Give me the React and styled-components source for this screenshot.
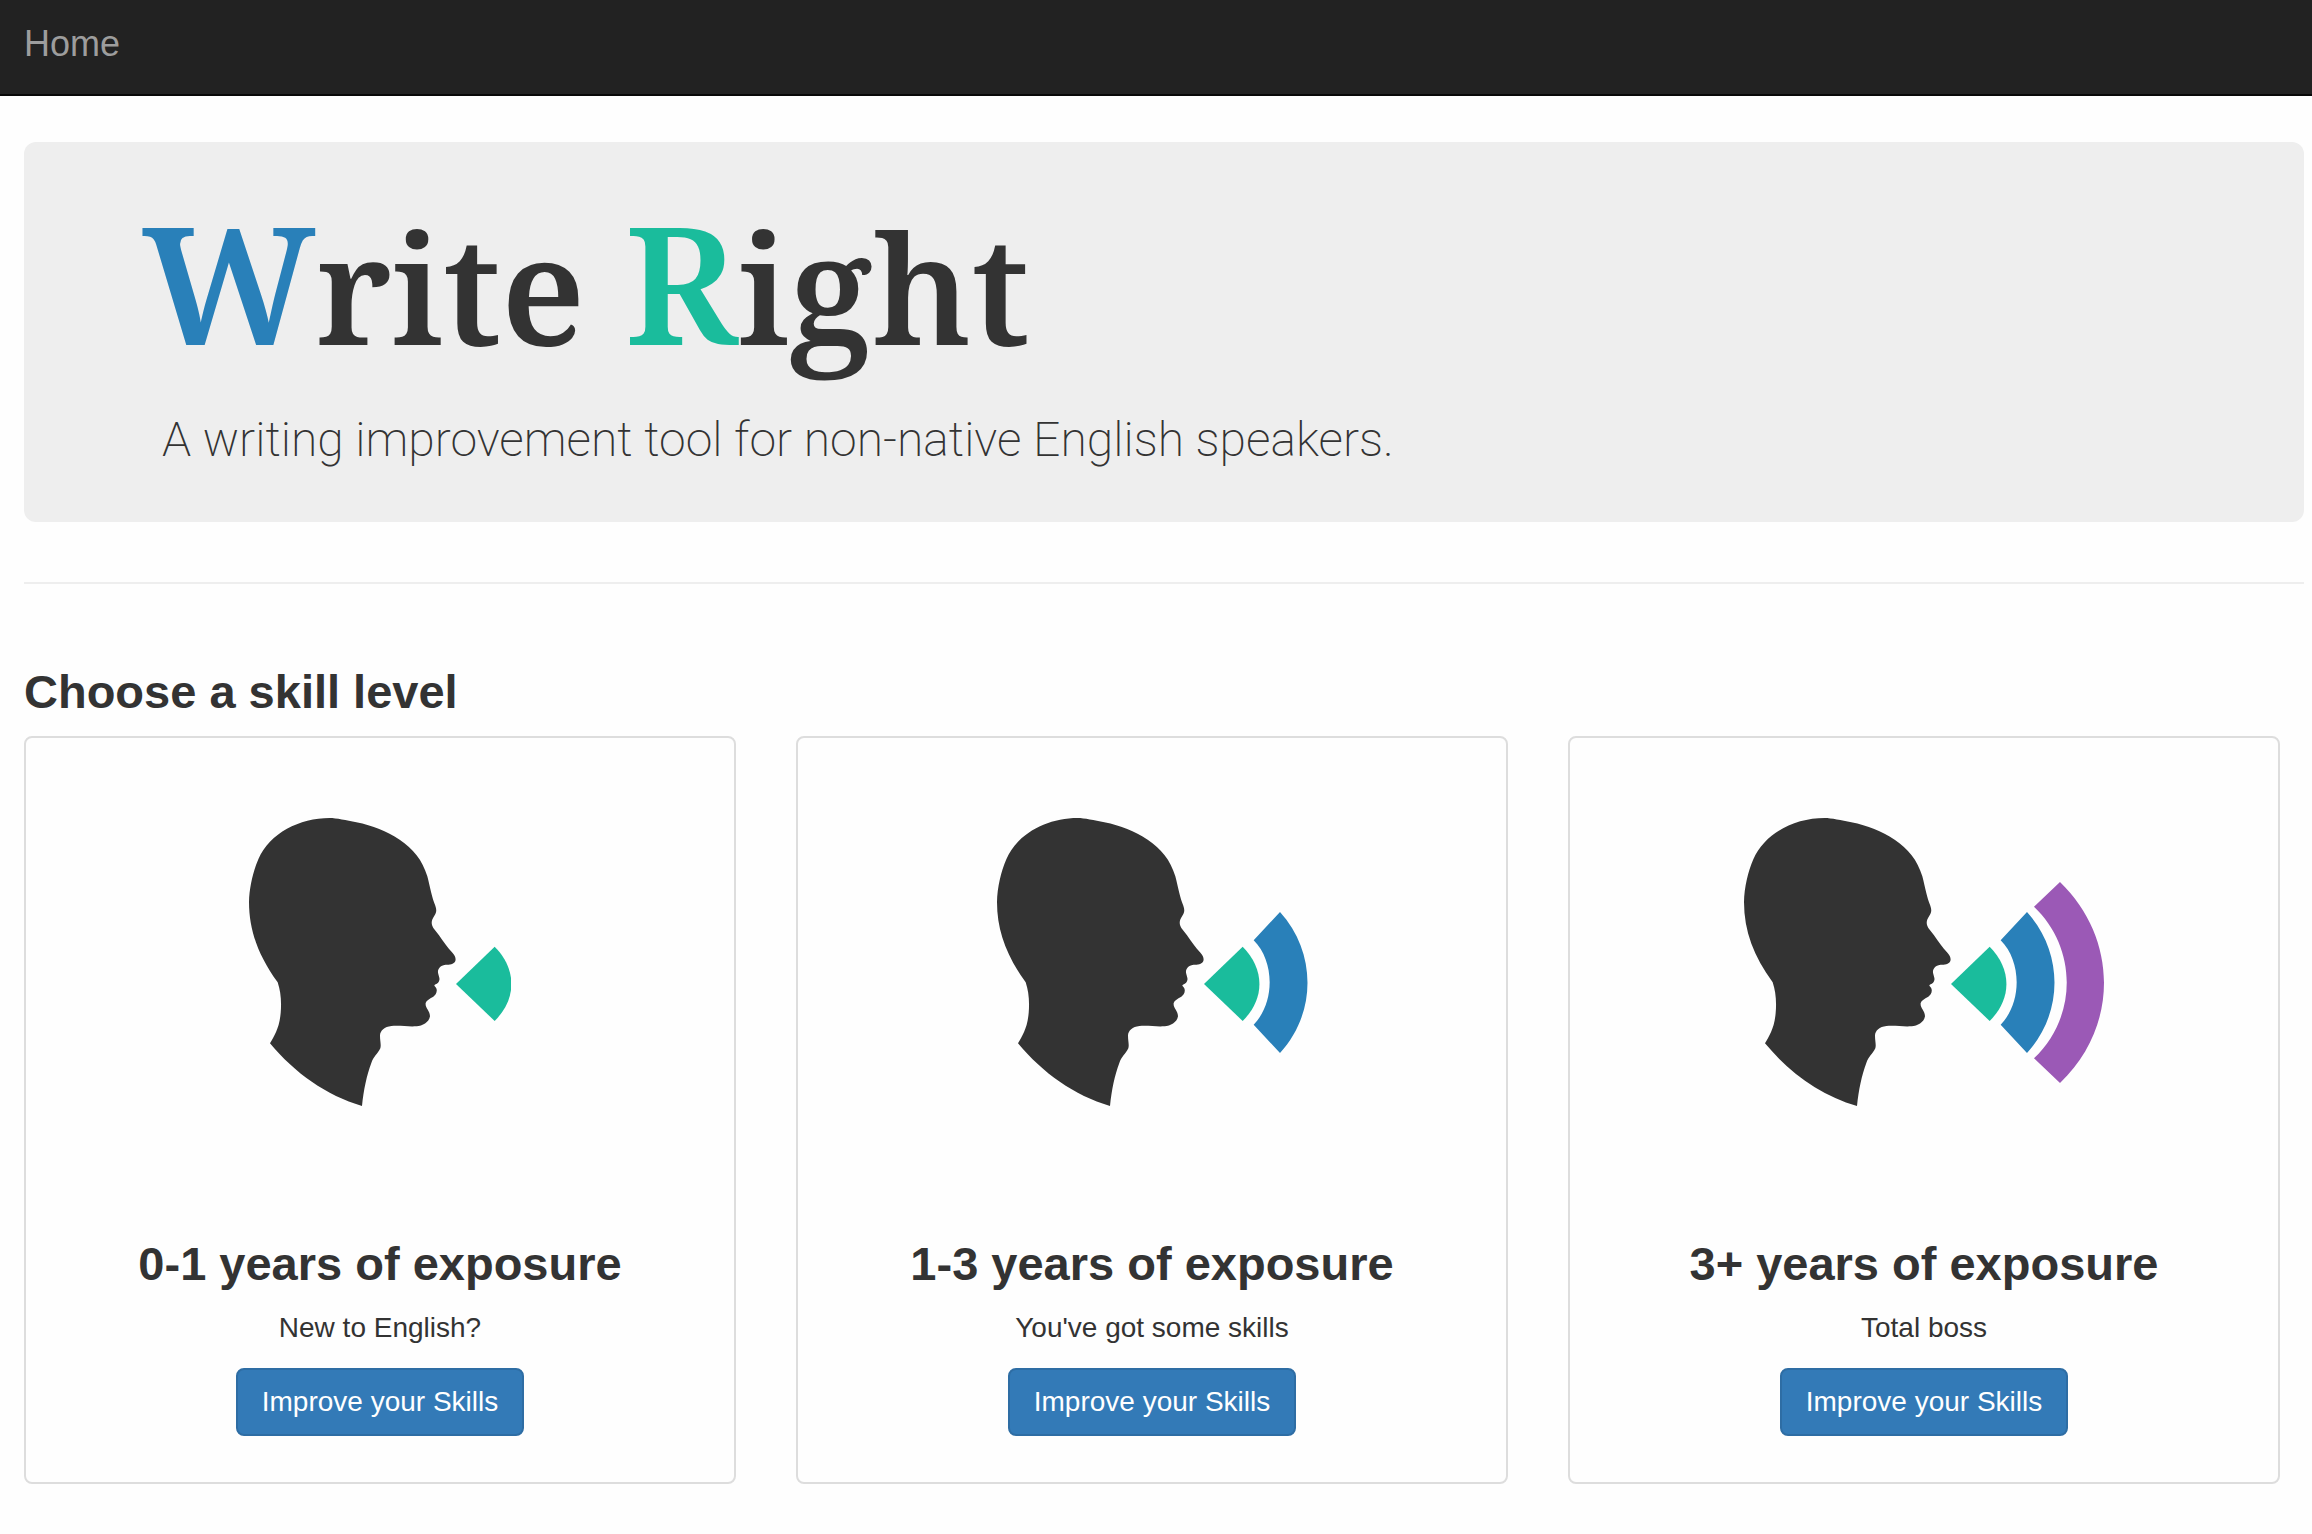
import styled, { createGlobalStyle } from 'styled-components'

const colors = {
    text: '#333333',
    blue: '#2980b9',
    green: '#1abc9c',
    purple: '#9b59b6',
    navbar: '#222222',
    navbarLink: '#9d9d9d',
    jumbotron: '#eeeeee',
    border: '#dddddd',
    primary: '#337ab7',
    primaryBorder: '#2e6da4',
}

const GlobalStyle = createGlobalStyle`
    * {
        box-sizing: border-box;
    }
    body {
        margin: 0;
        background-color: #fefefe;
        color: ${colors.text};
        font-family: 'Liberation Sans', Arial, sans-serif;
        font-size: 28px;
        line-height: 40px;
    }
`

const Navbar = styled.nav`
    padding: 24px 24px 30px;
    background-color: ${colors.navbar};
    border-bottom: 2px solid #080808;
`

const NavLink = styled.a`
    display: block;
    width: fit-content;
    font-size: 36px;
    color: ${colors.navbarLink};
    text-decoration: none;
    &:hover {
        color: #ffffff;
    }
`

const Main = styled.main`
    padding: 46px 8px 50px 24px;
`

const Jumbotron = styled.header`
    padding: 60px 118px 54px;
    border-radius: 12px;
    background-color: ${colors.jumbotron};
`

const Title = styled.h1`
    margin: 0 0 40px;
    font-family: 'Noto Serif', 'Liberation Serif', serif;
    font-size: 151px;
    font-weight: 600;
    line-height: 170px;
`

const Initial = styled.span`
    font-size: 164px;
    line-height: 150px;
    color: ${(props) => props.$color};
`

const Tagline = styled.p`
    margin: 0;
    padding-left: 20px;
    font-family: Roboto, sans-serif;
    font-size: 48px;
    font-weight: 200;
    line-height: 56px;
`

const Divider = styled.hr`
    margin: 60px 0 82px;
    border: 0;
    border-top: 2px solid ${colors.jumbotron};
`

const Levels = styled.section`
    padding-right: 24px;
`

const Heading = styled.h3`
    margin: 0 0 18px;
    font-size: 47px;
    font-weight: bold;
    line-height: 52px;
`

const CardGrid = styled.div`
    display: grid;
    grid-template-columns: repeat(3, 1fr);
    gap: 60px;
`

const Card = styled.article`
    display: flex;
    flex-direction: column;
    align-items: center;
    padding: 80px 8px 46px;
    border: 2px solid ${colors.border};
    border-radius: 8px;
    text-align: center;
`

const Illustration = styled.svg`
    height: 288px;
    margin-bottom: 132px;
`

const CardText = styled.p`
    margin: 0 0 20px;
`

const Button = styled.button`
    padding: 12px 24px;
    border: 2px solid ${colors.primaryBorder};
    border-radius: 8px;
    background-color: ${colors.primary};
    color: #ffffff;
    font-family: inherit;
    font-size: 28px;
    line-height: 40px;
    cursor: pointer;
`

const waves = [
    {
        color: colors.green,
        d: 'M769 613 L885 501 C952 568 952 658 885 724 Z',
    },
    {
        color: colors.blue,
        d: 'M918 482 L997 397 C1107 518 1107 700 997 820 L918 735 C982 670 982 546 918 482 Z',
    },
    {
        color: colors.purple,
        d: 'M1018 381 L1096 307 C1272 478 1272 742 1096 910 L1018 836 C1149 712 1149 505 1018 381 Z',
    },
]

const levels = [
    { title: '0-1 years of exposure', text: 'New to English?', width: 788 },
    { title: '1-3 years of exposure', text: "You've got some skills", width: 933 },
    { title: '3+ years of exposure', text: 'Total boss', width: 1081 },
]

function TalkingHead({ width, count }) {
    return (
        <Illustration viewBox={`148 115 ${width} 864`} aria-hidden="true">
            <path
                fill={colors.text}
                d="M390 115 C410 115 440 122 470 128 C520 138 560 154 600 180 C640 207 668 240 683 290 C692 325 697 355 707 378 C711 390 711 396 705 407 C694 424 694 431 701 445 L718 467 C733 488 743 503 757 518 C769 531 770 541 765 548 C758 556 745 555 734 556 C720 559 714 569 715 579 C717 590 722 596 718 605 C714 614 706 613 704 618 C713 626 713 634 708 644 C700 656 685 656 678 670 C676 686 691 692 691 710 C688 729 668 739 651 740 C625 742 605 737 575 739 C555 741 541 753 541 768 C541 784 545 795 542 806 C534 822 521 832 515 850 C501 888 492 930 487 979 C380 948 285 880 211 791 C224 768 239 746 243 700 C246 665 243 635 234 608 C178 530 148 455 148 367 C149 323 160 276 176 239 C210 160 300 115 390 115 Z"
            />
            {waves.slice(0, count).map((wave) => (
                <path key={wave.color} fill={wave.color} d={wave.d} />
            ))}
        </Illustration>
    )
}

function App() {
    return (
        <>
            <GlobalStyle />
            <Navbar>
                <NavLink href="#">Home</NavLink>
            </Navbar>
            <Main>
                <Jumbotron>
                    <Title>
                        <Initial $color={colors.blue}>W</Initial>rite{' '}
                        <Initial $color={colors.green}>R</Initial>ight
                    </Title>
                    <Tagline>
                        A writing improvement tool for non-native English
                        speakers.
                    </Tagline>
                </Jumbotron>
                <Divider />
                <Levels>
                    <Heading>Choose a skill level</Heading>
                    <CardGrid>
                        {levels.map((level, index) => (
                            <Card key={level.title}>
                                <TalkingHead
                                    width={level.width}
                                    count={index + 1}
                                />
                                <Heading>{level.title}</Heading>
                                <CardText>{level.text}</CardText>
                                <Button type="button">
                                    Improve your Skills
                                </Button>
                            </Card>
                        ))}
                    </CardGrid>
                </Levels>
            </Main>
        </>
    )
}

export default App
